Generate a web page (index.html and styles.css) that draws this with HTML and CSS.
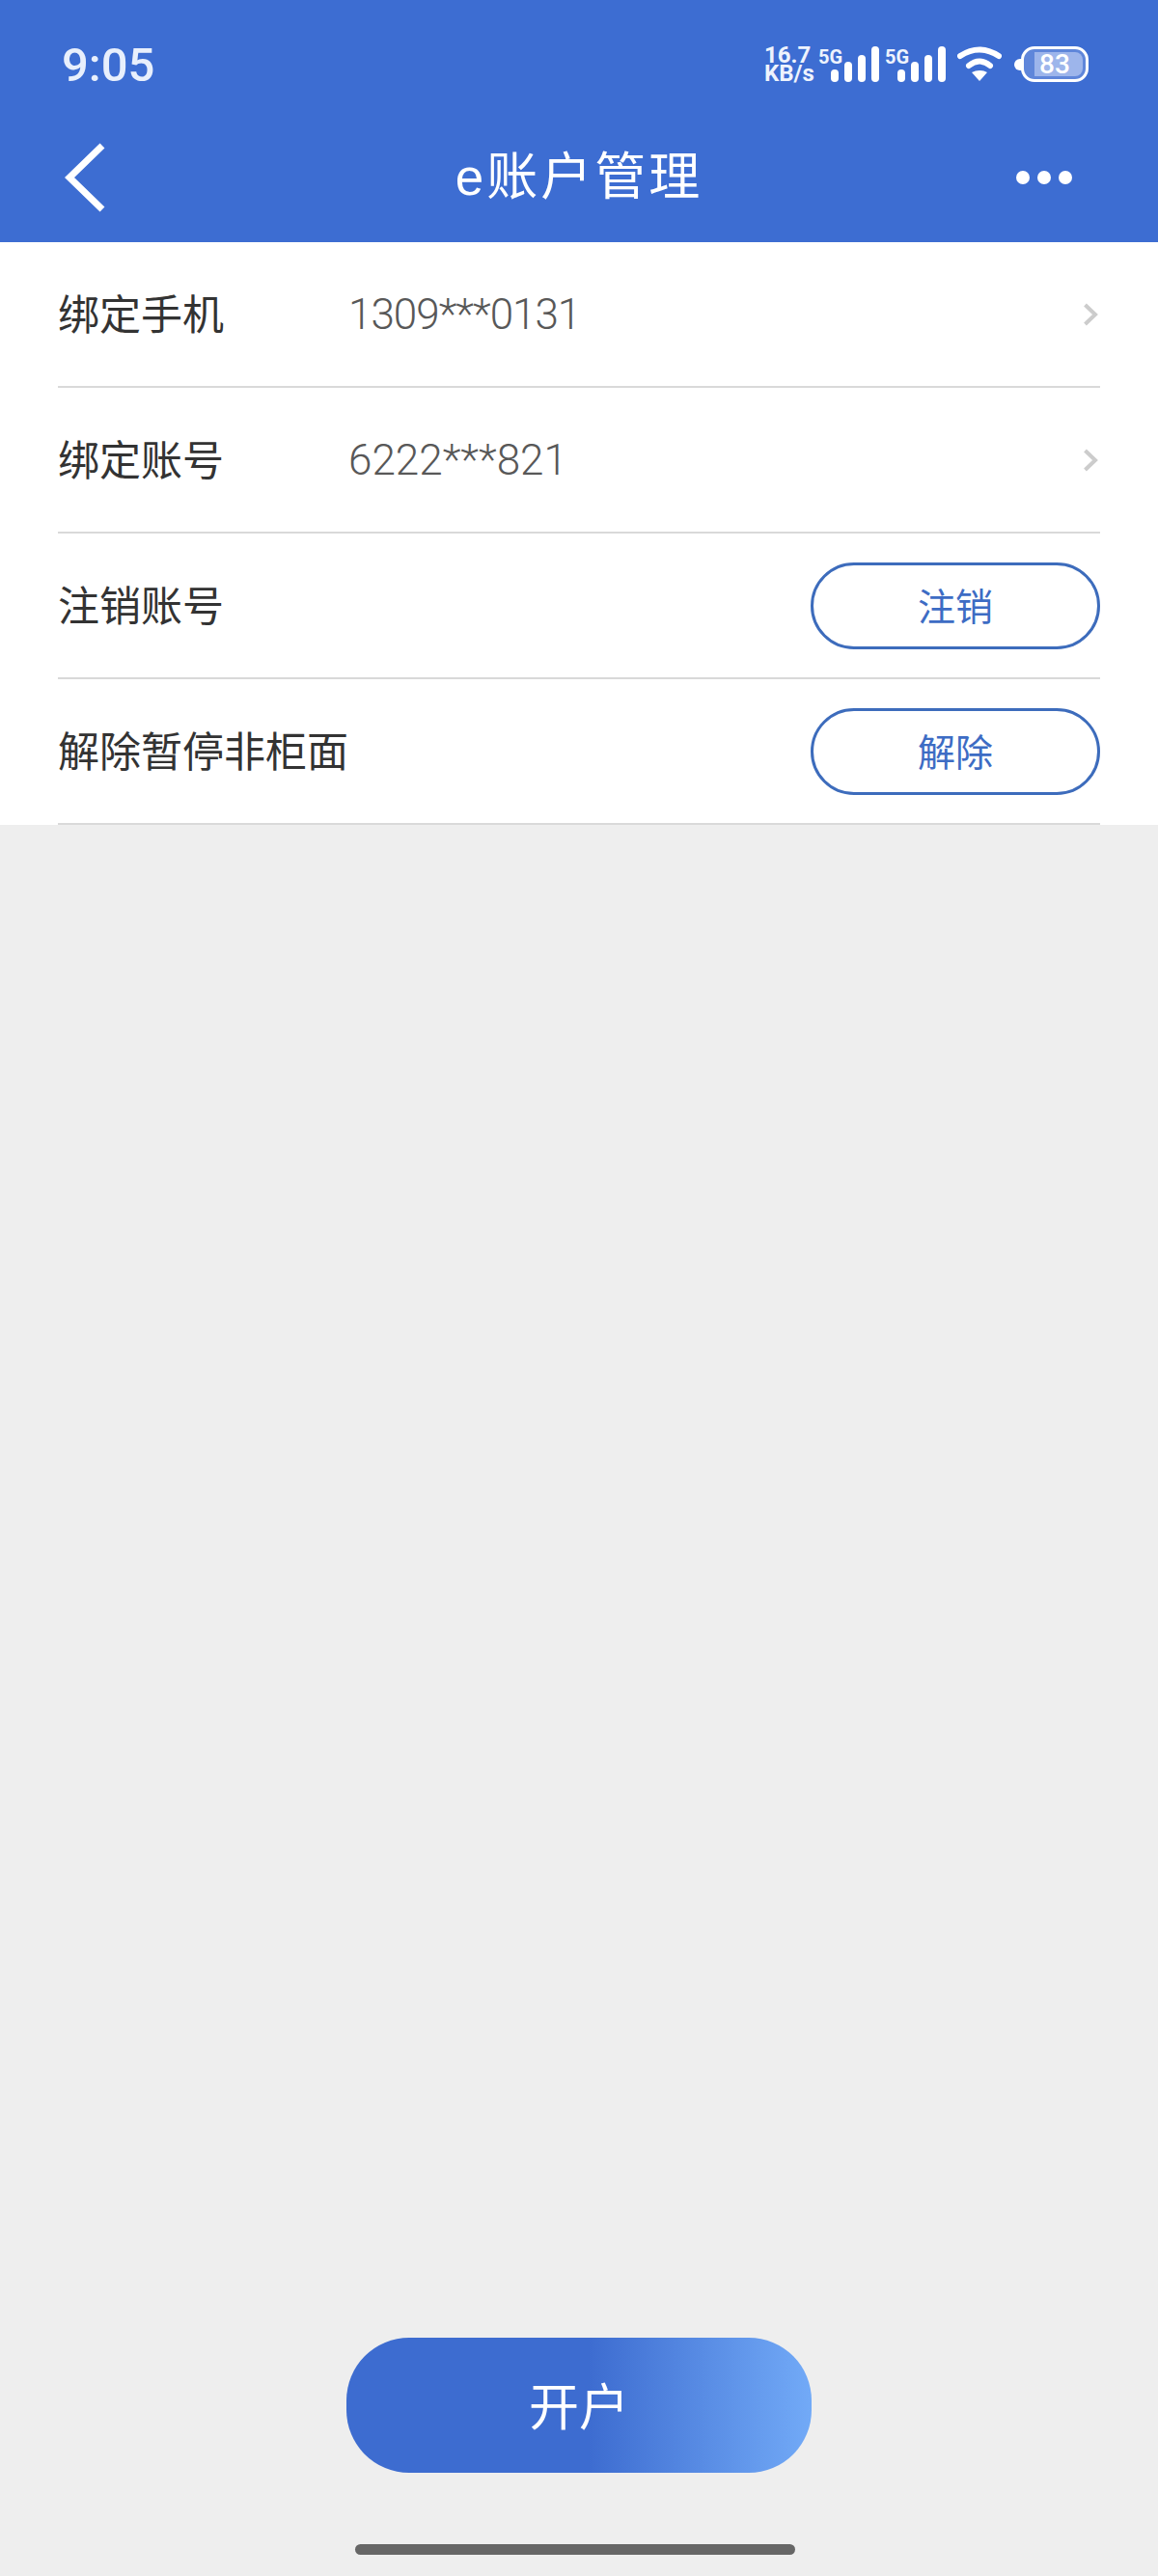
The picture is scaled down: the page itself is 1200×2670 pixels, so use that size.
FILE: index.html
```html
<!DOCTYPE html>
<html lang="zh-CN">
<head>
<meta charset="utf-8">
<title>e账户管理</title>
<link rel="stylesheet" href="styles.css">
</head>
<body>
<div class="app">
  <header class="head">
    <div class="status">
      <span class="time">9:05</span>
      <div class="indicators">
        <div class="speed"><span>16.7</span><span>KB/s</span></div>
        <div class="signals">
          <div class="signal">
            <span class="gen">5G</span>
            <svg class="bars" viewBox="0 0 50 37"><rect x="0" y="24" width="8" height="13" rx="4"/><rect x="14" y="16" width="8" height="21" rx="4"/><rect x="28" y="9" width="8" height="28" rx="4"/><rect x="42" y="0" width="8" height="37" rx="4"/></svg>
          </div>
          <div class="signal">
            <span class="gen">5G</span>
            <svg class="bars" viewBox="0 0 50 37"><rect x="0" y="24" width="8" height="13" rx="4"/><rect x="14" y="16" width="8" height="21" rx="4"/><rect x="28" y="9" width="8" height="28" rx="4"/><rect x="42" y="0" width="8" height="37" rx="4"/></svg>
          </div>
        </div>
        <svg class="wifi" viewBox="0 0 46 36"><path class="arc" d="M3 10 Q23 -3 43 10"/><path class="arc" d="M12 20 Q23 11 34 20"/><path class="wedge" d="M15 27 Q23 23 31 27 L23 36 Z"/></svg>
        <div class="battery">
          <i class="nub"></i>
          <div class="cell"><div class="charge">83</div></div>
        </div>
      </div>
    </div>
    <div class="toolbar">
      <svg class="back" viewBox="0 0 44 72"><path d="M39 3 L5 36 L39 69"/></svg>
      <h1 class="title">e账户管理</h1>
      <div class="more"><i></i><i></i><i></i></div>
    </div>
  </header>

  <section class="list">
    <div class="row">
      <span class="label">绑定手机</span>
      <span class="value tight">1309***0131</span>
      <svg class="chev" viewBox="0 0 15 24"><path d="M2 2 L12.5 12 L2 22"/></svg>
    </div>
    <div class="row">
      <span class="label">绑定账号</span>
      <span class="value">6222***821</span>
      <svg class="chev" viewBox="0 0 15 24"><path d="M2 2 L12.5 12 L2 22"/></svg>
    </div>
    <div class="row">
      <span class="label wide">注销账号</span>
      <button class="pill">注销</button>
    </div>
    <div class="row">
      <span class="label wide">解除暂停非柜面</span>
      <button class="pill">解除</button>
    </div>
  </section>

  <div class="foot">
    <button class="open">开户</button>
    <div class="home"></div>
  </div>
</div>
</body>
</html>
```
FILE: styles.css
```css
* { box-sizing: border-box; }
html, body { margin: 0; padding: 0; }
body {
  background: #eeeeee;
  font-family: "Noto Sans CJK SC", "Noto Sans", sans-serif;
}
.app {
  width: 1200px;
  height: 2670px;
  display: flex;
  flex-direction: column;
}
.head {
  height: 251px;
  background: #3d6dd2;
  color: #fff;
}
.status {
  height: 116px;
  padding: 48px 72px 0 64px;
  display: flex;
  justify-content: space-between;
  align-items: flex-start;
}
.time {
  font-family: Roboto, sans-serif;
  font-weight: 500;
  font-size: 49px;
  line-height: 40px;
  color: #e8effc;
}
.indicators {
  display: flex;
  align-items: flex-start;
}
.speed {
  width: 56px;
  display: flex;
  flex-direction: column;
  font-family: Roboto, sans-serif;
  font-weight: 700;
  font-size: 24px;
  line-height: 19px;
  color: #eef3fd;
}
.signals { display: flex; gap: 6px; }
.signal { display: flex; align-items: flex-start; width: 63px; }
.gen {
  width: 13px;
  flex: none;
  margin-top: 1px;
  font-family: Roboto, sans-serif;
  font-weight: 700;
  font-size: 20px;
  line-height: 20px;
  white-space: nowrap;
  color: #eef3fd;
}
.bars { width: 50px; height: 37px; flex: none; fill: #fff; }
.wifi { width: 46px; height: 36px; margin-left: 12px; flex: none; }
.arc { fill: none; stroke: #fff; stroke-width: 6; stroke-linecap: round; }
.wedge { fill: #fff; }
.battery {
  display: flex;
  align-items: center;
  margin-left: 13px;
  height: 37px;
}
.nub {
  width: 8px;
  height: 12px;
  margin-right: -1px;
  border-radius: 6px 0 0 6px;
  background: #fff;
}
.cell {
  width: 70px;
  height: 37px;
  padding: 3px;
  border: 3px solid #fff;
  border-radius: 14px;
  background: #5f86da;
  display: flex;
  justify-content: flex-end;
}
.charge {
  width: 50px;
  padding-right: 8px;
  border-radius: 0 8px 8px 0;
  background: #9db5eb;
  font-family: Roboto, sans-serif;
  font-weight: 500;
  font-size: 28px;
  line-height: 25px;
  text-align: center;
  color: #fff;
}
.toolbar {
  height: 135px;
  display: grid;
  grid-template-columns: 1fr auto 1fr;
  align-items: center;
  padding: 0 67px;
}
.back { width: 44px; height: 72px; }
.back path { fill: none; stroke: #fff; stroke-width: 7; stroke-linecap: butt; }
.title {
  margin: 0;
  font-weight: 400;
  font-size: 53px;
  line-height: 70px;
  letter-spacing: 3px;
  color: #fff;
  font-family: "Liberation Sans", "Noto Sans CJK SC", sans-serif;
}
.more {
  justify-self: end;
  margin-right: 22px;
  display: flex;
  gap: 8px;
}
.more i {
  width: 14px;
  height: 14px;
  border-radius: 50%;
  background: #fff;
}
.list {
  background: #fff;
  padding: 0 60px;
}
.row {
  height: 151px;
  display: flex;
  align-items: center;
  border-bottom: 2px solid #d9d9d9;
}
.label {
  width: 301px;
  flex: none;
  padding-bottom: 5px;
  font-size: 43px;
  color: #333;
  white-space: nowrap;
}
.label.wide { flex: 1; }
.value {
  flex: 1;
  font-family: Roboto, sans-serif;
  font-weight: 300;
  font-size: 44px;
  color: #585858;
}
.value.tight { letter-spacing: -1px; }
.chev { width: 16px; height: 24px; margin-right: 2px; flex: none; }
.chev path { fill: none; stroke: #cccccc; stroke-width: 4; }
.pill {
  width: 300px;
  height: 90px;
  border: 3px solid #3d6cbc;
  border-radius: 45px;
  background: #fff;
  color: #3d6cc4;
  font-family: inherit;
  font-size: 39px;
  padding: 0 0 4px;
}
.foot {
  margin-top: auto;
  display: flex;
  flex-direction: column;
  align-items: center;
  padding-bottom: 22px;
}
.open {
  width: 482px;
  height: 140px;
  border: 0;
  border-radius: 65px;
  background: linear-gradient(90deg, #3d6cd0 0%, #3d6cd0 52%, #72aaf7 100%);
  color: #fff;
  font-family: inherit;
  font-size: 52px;
  padding: 0 0 3px;
}
.home {
  width: 456px;
  height: 11px;
  margin-top: 74px;
  margin-left: -8px;
  border-radius: 6px;
  background: #666;
}
```
